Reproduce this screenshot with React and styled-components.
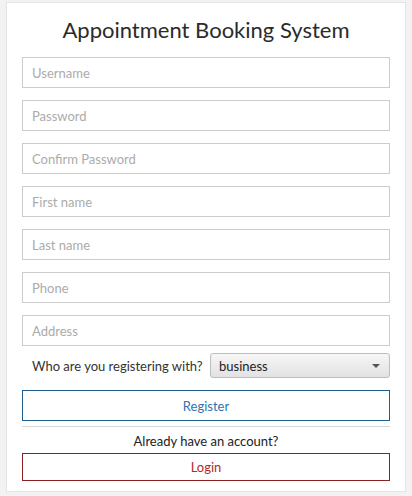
import styled, { createGlobalStyle } from "styled-components";

const GlobalStyle = createGlobalStyle`
  body {
    margin: 0;
    background: #f2f2f2;
    font-family: "Lato", "Liberation Sans", sans-serif;
    color: #333;
  }
`;

const fields = [
  { name: "username", placeholder: "Username", type: "text" },
  { name: "password", placeholder: "Password", type: "password" },
  { name: "confirm", placeholder: "Confirm Password", type: "password" },
  { name: "first", placeholder: "First name", type: "text" },
  { name: "last", placeholder: "Last name", type: "text" },
  { name: "phone", placeholder: "Phone", type: "text" },
  { name: "address", placeholder: "Address", type: "text" },
];

export default function App() {
  return (
    <>
      <GlobalStyle />
      <Card>
        <Title>Appointment Booking System</Title>
        <Form onSubmit={(e) => e.preventDefault()}>
          {fields.map((f) => (
            <Input key={f.name} name={f.name} type={f.type} placeholder={f.placeholder} />
          ))}
          <SelectRow>
            <label>Who are you registering with?</label>
            <Select>
              <span>business</span>
              <Caret />
            </Select>
          </SelectRow>
          <Button $tone="blue" type="submit">Register</Button>
        </Form>
        <Divider />
        <Hint>Already have an account?</Hint>
        <Button $tone="red" $small>Login</Button>
      </Card>
    </>
  );
}

const Card = styled.div`
  box-sizing: border-box;
  width: 400px;
  height: 490px;
  margin: 2px 0 0 6px;
  padding: 12px 15px 10px;
  background: #fff;
  border: 1px solid #e4e4e4;
  display: flex;
  flex-direction: column;
`;

const Title = styled.h1`
  margin: 0 0 12px;
  font-size: 22px;
  line-height: 30px;
  font-weight: 400;
  text-align: center;
  color: #2b2b2b;
`;

const Form = styled.form`
  display: flex;
  flex-direction: column;
  gap: 12px;
`;

const Input = styled.input`
  box-sizing: border-box;
  width: 100%;
  height: 31px;
  padding: 0 9px;
  border: 1px solid #cccccc;
  border-radius: 0;
  font-family: inherit;
  font-size: 13px;
  color: #333;
  outline: none;
  &::placeholder {
    color: #ababab;
  }
`;

const SelectRow = styled.div`
  display: flex;
  align-items: center;
  justify-content: space-between;
  margin-top: -5px;
  padding-left: 10px;
  font-size: 13px;
  color: #333;
`;

const Select = styled.div`
  box-sizing: border-box;
  width: 180px;
  height: 25px;
  padding: 0 8px;
  display: flex;
  align-items: center;
  justify-content: space-between;
  border: 1px solid #bdbdbd;
  border-radius: 3px;
  background: linear-gradient(#f6f6f6, #e2e2e2);
  color: #222;
  font-size: 13px;
`;

const Caret = styled.span`
  width: 0;
  height: 0;
  margin-right: 1px;
  border-left: 4px solid transparent;
  border-right: 4px solid transparent;
  border-top: 4px solid #555;
`;

const Button = styled.button`
  box-sizing: border-box;
  width: 100%;
  height: ${(p) => (p.$small ? "28px" : "31px")};
  background: #fff;
  border: 1px solid ${(p) => (p.$tone === "red" ? "#8a1f22" : "#1f5f8f")};
  color: ${(p) => (p.$tone === "red" ? "#b22a2a" : "#2f74ad")};
  font-family: inherit;
  font-size: 13px;
  cursor: pointer;
`;

const Divider = styled.hr`
  margin: 5px 0 0;
  border: 0;
  border-top: 1px solid #d6d6d6;
`;

const Hint = styled.p`
  margin: 6px 0 3px;
  font-size: 13px;
  line-height: 17px;
  text-align: center;
  color: #222;
`;
